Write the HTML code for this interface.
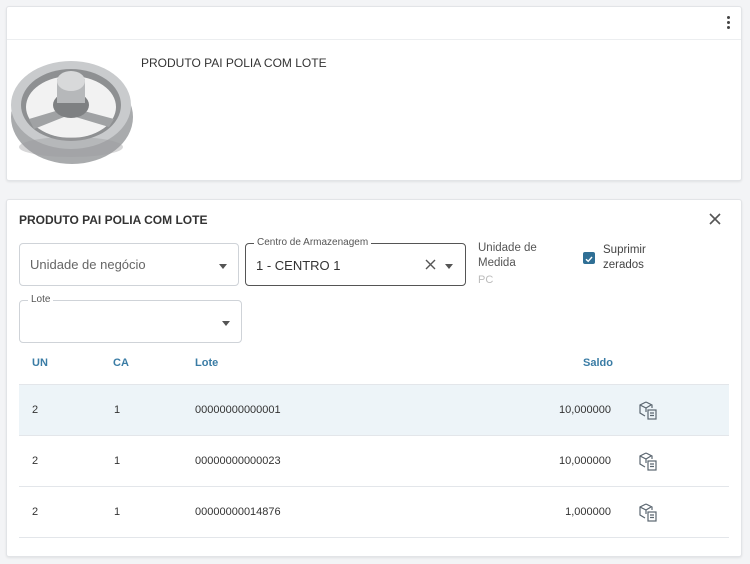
<!DOCTYPE html>
<html><head><meta charset="utf-8"><style>
*{box-sizing:border-box;margin:0;padding:0}
body{width:750px;height:564px;background:#f3f4f6;font-family:"Liberation Sans",sans-serif;color:#333;position:relative;overflow:hidden}
.card{position:absolute;background:#fff;border:1px solid #e2e4e7;border-radius:3px;box-shadow:0 1px 2px rgba(0,0,0,.08)}
.abs{position:absolute}
.fld{position:absolute;border:1px solid #cfd3d8;border-radius:4px}
.lbl{position:absolute;top:-7px;left:8px;background:#fff;padding:0 3px;font-size:10px;color:#555}
.caret{position:absolute;width:0;height:0;border-left:4.5px solid transparent;border-right:4.5px solid transparent;border-top:5px solid #555}
.th{position:absolute;top:357px;font-size:11px;font-weight:bold;color:#3a7ca5}
.row{position:absolute;left:19px;width:710px;height:51px;border-bottom:1px solid #e3e6ea;font-size:11px;color:#333}
.row span{position:absolute;top:19px}
</style></head><body>
<div class="card" style="left:6px;top:6px;width:736px;height:175px">
  <div class="abs" style="left:0;top:32px;width:734px;border-top:1px solid #eceef0"></div>
  <div class="abs" style="left:720px;top:9px;width:3px;height:3px;background:#444;border-radius:50%;box-shadow:0 5px 0 #444,0 10px 0 #444"></div>
  <svg class="abs" style="left:2px;top:50px" width="126" height="110" viewBox="0 0 126 110">
    <ellipse cx="63" cy="60" rx="61" ry="47" fill="#a9abad"/>
    <ellipse cx="62" cy="48" rx="60" ry="44" fill="#c9cbcd"/>
    <ellipse cx="62" cy="48" rx="50" ry="36" fill="#8e9092"/>
    <ellipse cx="62" cy="50" rx="45" ry="31" fill="#f2f2f2"/>
    <path d="M20 62 L60 50 L105 62 L100 70 L60 58 L25 72Z" fill="#a0a2a4"/>
    <path d="M55 20 L70 20 L68 50 L57 50Z" fill="#a8aaac"/>
    <ellipse cx="62" cy="48" rx="18" ry="13" fill="#7e8082"/>
    <rect x="48" y="22" width="28" height="24" fill="#b6b8ba"/>
    <ellipse cx="62" cy="24" rx="14" ry="10" fill="#d8d9da"/>
    <ellipse cx="62" cy="90" rx="52" ry="10" fill="#9a9c9e" opacity=".4"/>
  </svg>
  <div class="abs" style="left:134px;top:49px;font-size:12px;color:#333">PRODUTO PAI POLIA COM LOTE</div>
</div>
<div class="card" style="left:6px;top:199px;width:736px;height:358px"></div>
<div class="abs" style="left:19px;top:213px;font-size:12px;font-weight:bold;color:#333">PRODUTO PAI POLIA COM LOTE</div>
<svg class="abs" style="left:709px;top:213px" width="12" height="12"><path d="M1 1L11 11M11 1L1 11" stroke="#555" stroke-width="1.6"/></svg>
<div class="fld" style="left:19px;top:243px;width:220px;height:43px"><div class="abs" style="left:10px;top:13px;font-size:13px;color:#666">Unidade de negócio</div><div class="caret" style="left:199px;top:20px"></div></div>
<div class="fld" style="left:245px;top:243px;width:221px;height:43px;border-color:#555"><div class="lbl">Centro de Armazenagem</div><div class="abs" style="left:10px;top:14px;font-size:13px;color:#333">1 - CENTRO 1</div>
<svg class="abs" style="left:179px;top:15px" width="11" height="11"><path d="M1 1L10 10M10 1L1 10" stroke="#555" stroke-width="1.4"/></svg><div class="caret" style="left:199px;top:20px"></div></div>
<div class="abs" style="left:478px;top:241px;font-size:11.5px;line-height:15px;color:#555">Unidade de<br>Medida</div>
<div class="abs" style="left:478px;top:274px;font-size:11px;color:#bbb">PC</div>
<div class="abs" style="left:583px;top:252px;width:12px;height:12px;background:#2f6f95;border-radius:2px"><svg width="12" height="12"><path d="M3 6.2L5.2 8.3L9 4" stroke="#fff" stroke-width="1.4" fill="none"/></svg></div>
<div class="abs" style="left:603px;top:243px;font-size:11.5px;line-height:15px;color:#444">Suprimir<br>zerados</div>
<div class="fld" style="left:19px;top:300px;width:223px;height:43px"><div class="lbl">Lote</div><div class="caret" style="left:202px;top:20px"></div></div>
<div class="th" style="left:32px">UN</div><div class="th" style="left:113px">CA</div><div class="th" style="left:195px">Lote</div><div class="th" style="left:583px">Saldo</div>
<div class="abs" style="left:19px;top:384px;width:710px;border-top:1px solid #e3e6ea"></div>
<div class="row" style="top:385px;background:#edf4f8"><span style="left:13px">2</span><span style="left:95px">1</span><span style="left:176px">00000000000001</span><span style="right:118px">10,000000</span></div>
<div class="row" style="top:436px"><span style="left:13px">2</span><span style="left:95px">1</span><span style="left:176px">00000000000023</span><span style="right:118px">10,000000</span></div>
<div class="row" style="top:487px"><span style="left:13px">2</span><span style="left:95px">1</span><span style="left:176px">00000000014876</span><span style="right:118px">1,000000</span></div>
<svg class="abs" style="left:639px;top:401px" width="19" height="20"><g fill="none" stroke="#5b6670" stroke-width="1.2"><path d="M7 1L13 4V7M7 1L1 4V12L6 15M1 4L7 7V11M7 7L12 4"/><rect x="9" y="9" width="8" height="9"/><path d="M11 12H15M11 14.5H15"/></g></svg>
<svg class="abs" style="left:639px;top:452px" width="19" height="20"><g fill="none" stroke="#5b6670" stroke-width="1.2"><path d="M7 1L13 4V7M7 1L1 4V12L6 15M1 4L7 7V11M7 7L12 4"/><rect x="9" y="9" width="8" height="9"/><path d="M11 12H15M11 14.5H15"/></g></svg>
<svg class="abs" style="left:639px;top:503px" width="19" height="20"><g fill="none" stroke="#5b6670" stroke-width="1.2"><path d="M7 1L13 4V7M7 1L1 4V12L6 15M1 4L7 7V11M7 7L12 4"/><rect x="9" y="9" width="8" height="9"/><path d="M11 12H15M11 14.5H15"/></g></svg>
</body></html>
